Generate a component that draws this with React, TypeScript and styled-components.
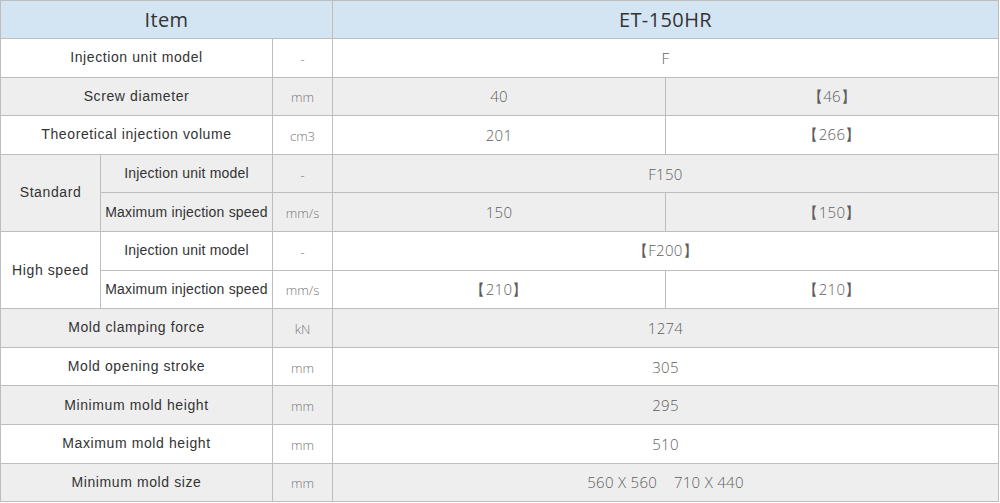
import { FunctionComponent } from "react";
import styled, { createGlobalStyle } from "styled-components";

interface SpecRow {
  label: string;
  unit: string;
  values: string[];
  shaded?: boolean;
}

const topRows: SpecRow[] = [
  { label: "Injection unit model", unit: "-", values: ["F"] },
  { label: "Screw diameter", unit: "mm", values: ["40", "【46】"], shaded: true },
  { label: "Theoretical injection volume", unit: "cm3", values: ["201", "【266】"] },
];

const groups: { name: string; shaded?: boolean; rows: SpecRow[] }[] = [
  {
    name: "Standard",
    shaded: true,
    rows: [
      { label: "Injection unit model", unit: "-", values: ["F150"] },
      { label: "Maximum injection speed", unit: "mm/s", values: ["150", "【150】"] },
    ],
  },
  {
    name: "High speed",
    rows: [
      { label: "Injection unit model", unit: "-", values: ["【F200】"] },
      { label: "Maximum injection speed", unit: "mm/s", values: ["【210】", "【210】"] },
    ],
  },
];

const bottomRows: SpecRow[] = [
  { label: "Mold clamping force", unit: "kN", values: ["1274"], shaded: true },
  { label: "Mold opening stroke", unit: "mm", values: ["305"] },
  { label: "Minimum mold height", unit: "mm", values: ["295"], shaded: true },
  { label: "Maximum mold height", unit: "mm", values: ["510"] },
  { label: "Minimum mold size", unit: "mm", values: ["560 X 560\u00a0\u00a0\u00a0\u00a0710 X 440"], shaded: true },
];

const ValueCells = ({ values }: { values: string[] }) =>
  values.length === 1 ? (
    <Value colSpan={2}>{values[0]}</Value>
  ) : (
    <>
      {values.map((v, i) => (
        <Value key={i}>{v}</Value>
      ))}
    </>
  );

const App: FunctionComponent = () => {
  return (
    <>
      <GlobalStyle />
      <Table>
        <colgroup>
          <col style={{ width: 100 }} />
          <col style={{ width: 172 }} />
          <col style={{ width: 60 }} />
          <col style={{ width: 333 }} />
          <col />
        </colgroup>
        <thead>
          <tr>
            <HeadCell colSpan={3}>Item</HeadCell>
            <HeadCell colSpan={2}>ET-150HR</HeadCell>
          </tr>
        </thead>
        <tbody>
          {topRows.map((r, i) => (
            <Row key={`t${i}`} shaded={r.shaded}>
              <Label colSpan={2}>{r.label}</Label>
              <Unit>{r.unit}</Unit>
              <ValueCells values={r.values} />
            </Row>
          ))}
          {groups.map((g) =>
            g.rows.map((r, i) => (
              <Row key={`${g.name}${i}`} shaded={g.shaded}>
                {i === 0 && <Label rowSpan={g.rows.length}>{g.name}</Label>}
                <SubLabel>{r.label}</SubLabel>
                <Unit>{r.unit}</Unit>
                <ValueCells values={r.values} />
              </Row>
            ))
          )}
          {bottomRows.map((r, i) => (
            <Row key={`b${i}`} shaded={r.shaded}>
              <Label colSpan={2}>{r.label}</Label>
              <Unit>{r.unit}</Unit>
              <ValueCells values={r.values} />
            </Row>
          ))}
        </tbody>
      </Table>
    </>
  );
};

const GlobalStyle = createGlobalStyle`
  body {
    margin: 0;
    background: #fff;
  }
`;

const Table = styled.table`
  width: 999px;
  border-collapse: collapse;
  table-layout: fixed;
  font-family: "Liberation Sans", Arial, sans-serif;

  td,
  th {
    border: 1px solid #bdbdbd;
    text-align: center;
    padding: 0;
  }
`;

const HeadCell = styled.th`
  height: 37px;
  background: #d3e5f2;
  color: #333;
  font-family: "Open Sans", "Liberation Sans", sans-serif;
  font-size: 20px;
  font-weight: 400;
  letter-spacing: 0.4px;
`;

interface RowProps {
  readonly shaded?: boolean;
}

const Row = styled.tr.withConfig({
  shouldForwardProp: (p) => p !== "shaded",
})<RowProps>`
  height: 38.6px;
  background: ${(props) => (props.shaded ? "#eeeeee" : "#ffffff")};
`;

const Label = styled.td`
  color: #333;
  font-size: 14px;
  letter-spacing: 0.6px;
  padding-bottom: 1px !important;
`;

const SubLabel = styled(Label)`
  letter-spacing: 0.2px;
`;

const Unit = styled.td`
  color: #777;
  font-family: "Open Sans", "Liberation Sans", sans-serif;
  font-size: 13px;
  font-weight: 300;
  padding-top: 2px !important;
`;

const Value = styled.td`
  color: #5e5e5e;
  font-family: "Open Sans", "Liberation Sans", sans-serif;
  font-size: 15px;
  font-weight: 300;
  letter-spacing: 0.3px;
`;

export default App;
